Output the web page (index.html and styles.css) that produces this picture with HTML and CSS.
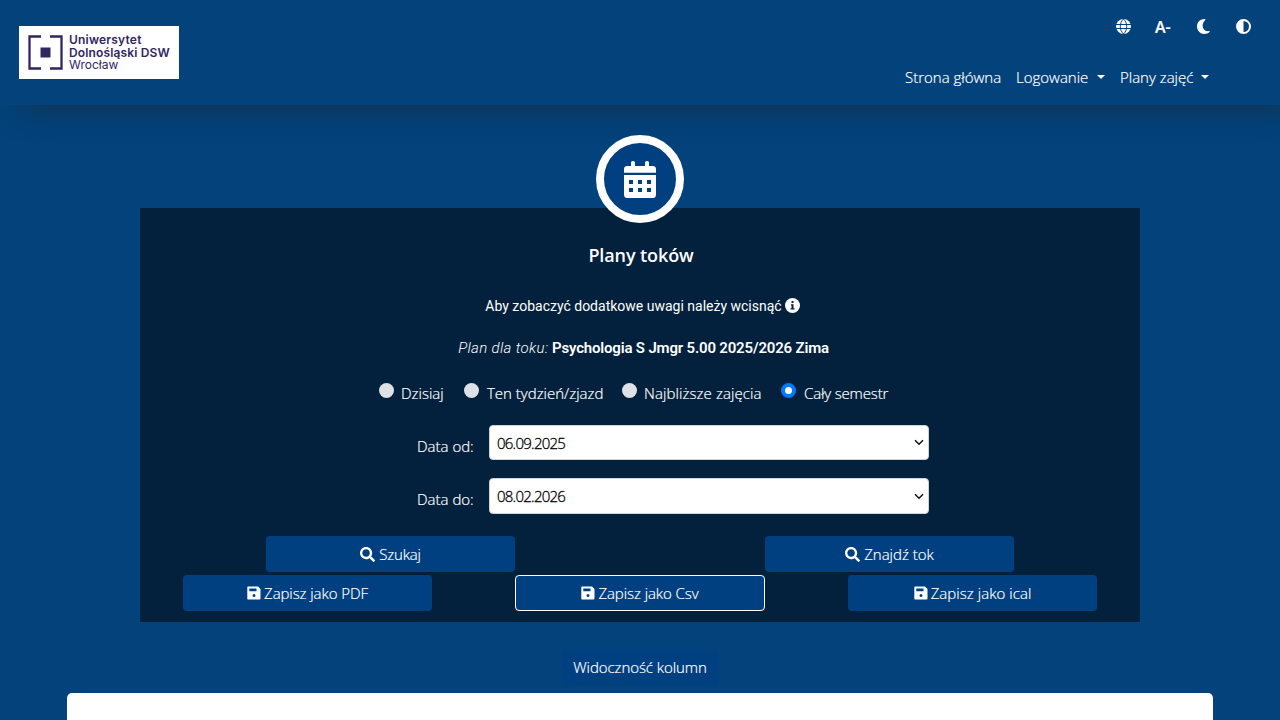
FILE: index.html
```html
<!DOCTYPE html>
<html lang="pl">
<head>
<meta charset="utf-8">
<title>Plany toków</title>
<link rel="stylesheet" href="styles.css">
</head>
<body>
<svg width="0" height="0" class="defs">
  <symbol id="search" viewBox="0 0 512 512"><path d="M505 442.700 405.300 343c-4.500-4.500-10.600-7-17-7H372c27.600-35.300 44-79.700 44-128C416 93.100 322.900 0 208 0S0 93.100 0 208s93.100 208 208 208c48.300 0 92.700-16.400 128-44v16.300c0 6.400 2.500 12.500 7 17l99.700 99.700c9.400 9.400 24.600 9.400 33.900 0l28.300-28.300c9.400-9.400 9.400-24.600.1-34zM208 336c-70.700 0-128-57.200-128-128s57.200-128 128-128 128 57.200 128 128-57.200 128-128 128z"/></symbol>
  <symbol id="save" viewBox="0 0 14 14"><path fill-rule="evenodd" d="M1 .5h10L13.500 3v9.500q0 1-1 1H1q-.7 0-.7-.7V1.200Q.3.500 1 .5zM2.300 2.500v2.800h7.200V2.500zM7 8a1.500 1.500 0 1 0 0 3 1.500 1.500 0 0 0 0-3z"/></symbol>
</svg>
<header class="topbar">
  <div class="logo">
    <svg class="logo-mark" width="35" height="35" viewBox="0 0 35 35"><path d="M13 1.500H1.500v32H13M22 1.500h11.500v32H22" fill="none" stroke="#32265f" stroke-width="2.300"/><path d="M12.500 12.500h10v10h-10z" fill="#32265f"/></svg>
    <div class="logo-text"><b>Uniwersytet</b><b class="second">Dolnośląski DSW</b><span>Wrocław</span></div>
  </div>
  <div class="top-right">
    <div class="tools">
      <svg width="15" height="15" viewBox="0 0 15 15"><circle cx="7.500" cy="7.500" r="7.500" fill="#fff"/><path d="M0 5.500h15M0 9.500h15M7.500 0C3.200 4 3.200 11 7.500 15M7.500 0C11.800 4 11.800 11 7.500 15" fill="none" stroke="#03427a" stroke-width="1"/></svg>
      <b class="font-size">A-</b>
      <svg width="15" height="15" viewBox="0 0 15 15"><path d="M8 .1C4 .2 1 3.500 1 7.500 1 11.700 4.300 15 8.400 15c2.100 0 4-.8 5.300-2.200.3-.4.1-.8-.4-.7C7.500 13.200 4 6.200 9.100 1.200c.7-.7.400-1.200-1.100-1.100z" fill="#fff"/></svg>
      <svg width="15" height="15" viewBox="0 0 15 15"><circle cx="7.500" cy="7.500" r="6.500" fill="none" stroke="#fff" stroke-width="2"/><path d="M7.500 1v13a6.500 6.500 0 0 1 0-13z" fill="#fff"/></svg>
    </div>
    <nav class="menu">
      <a class="m-home">Strona główna</a>
      <a class="m-login"><span>Logowanie</span><i class="caret"></i></a>
      <a class="m-plans"><span>Plany zajęć</span><i class="caret"></i></a>
    </nav>
  </div>
</header>
<main>
  <section class="card">
    <div class="badge"><svg width="32" height="37" viewBox="0 0 32 37"><path fill-rule="evenodd" fill="#fff" d="M0 14h32v19.500q0 3.500-3.500 3.500h-25Q0 37 0 33.500zM5 19v4h4v-4zm9 0v4h4v-4zm9 0v4h4v-4zM5 27v4h4v-4zm9 0v4h4v-4zm9 0v4h4v-4zM0 11.700V8.300Q0 5 3.500 5H7V1.500Q7 0 9 0t2 1.500V5h10V1.500Q21 0 23 0t2 1.500V5h3.500Q32 5 32 8.300v3.400z"/></svg></div>
    <h1>Plany toków</h1>
    <p class="hint"><span>Aby zobaczyć dodatkowe uwagi należy wcisnąć</span><svg width="15" height="15" viewBox="0 0 15 15"><circle cx="7.500" cy="7.500" r="7.500" fill="#fff"/><path d="M6.500 3h2v2h-2zM6 6.200h2.500v4H9.500v1.300h-4v-1.300h1V7.500H6z" fill="#03213d"/></svg></p>
    <p class="plan"><i>Plan dla toku:</i> <b>Psychologia S Jmgr 5.00 2025/2026 Zima</b></p>
    <div class="radios">
      <label class="r1"><i class="dot"></i><span>Dzisiaj</span></label>
      <label class="r2"><i class="dot"></i><span>Ten tydzień/zjazd</span></label>
      <label class="r3"><i class="dot"></i><span>Najbliższe zajęcia</span></label>
      <label class="r4"><i class="dot on"></i><span>Cały semestr</span></label>
    </div>
    <div class="field"><span class="label">Data od:</span><div class="select first"><span>06.09.2025</span><svg width="10" height="7" viewBox="0 0 10 7"><path d="M1 1.200 5 5.200 9 1.200" fill="none" stroke="#111" stroke-width="1.500"/></svg></div></div>
    <div class="field"><span class="label">Data do:</span><div class="select"><span>08.02.2026</span><svg width="10" height="7" viewBox="0 0 10 7"><path d="M1 1.200 5 5.200 9 1.200" fill="none" stroke="#111" stroke-width="1.500"/></svg></div></div>
    <div class="buttons two">
      <a class="btn"><svg class="ico"><use href="#search"/></svg><span class="t-search">Szukaj</span></a>
      <a class="btn"><svg class="ico"><use href="#search"/></svg><span>Znajdź tok</span></a>
    </div>
    <div class="buttons three">
      <a class="btn"><svg class="ico disk"><use href="#save"/></svg><span>Zapisz jako PDF</span></a>
      <a class="btn focus"><svg class="ico disk"><use href="#save"/></svg><span>Zapisz jako Csv</span></a>
      <a class="btn"><svg class="ico disk"><use href="#save"/></svg><span class="t-ical">Zapisz jako ical</span></a>
    </div>
  </section>
  <a class="btn columns"><span>Widoczność kolumn</span></a>
  <section class="table"></section>
</main>
</body>
</html>
```
FILE: styles.css
```css
* { box-sizing: border-box; }
body { margin: 0; height: 720px; overflow: hidden; background: #03427a; color: #fff; font: 300 15px/22px "Open Sans", sans-serif; -webkit-text-stroke: .2px currentColor; }
.defs { display: block; position: absolute; }
a { white-space: nowrap; color: #fff; }
.topbar { height: 105px; background: #03427a; display: flex; justify-content: space-between; padding: 26px 29px 0 19px; box-shadow: 16px 8px 32px -8px rgba(33, 37, 41, .65); }
.logo { width: 160px; height: 53px; background: #fff; display: flex; padding: 9px 0 0 9px; gap: 6px; color: #32265f; -webkit-text-stroke: 0; }
.logo-text { display: flex; flex-direction: column; font: 400 12px/12.500px "Inter", sans-serif; white-space: nowrap; margin-top: -1px; }
.logo-text b { font-weight: 600; letter-spacing: .2px; }
.logo-text b.second { letter-spacing: .15px; }
.top-right { display: flex; flex-direction: column; }
.tools { display: flex; justify-content: flex-end; align-items: center; height: 15px; margin-top: -7px; gap: 25px; }
.font-size { width: 17px; font-weight: 600; font-size: 16px; margin: 0 -1px; }
.menu { display: flex; margin: 32px 42px 0 0; justify-content: flex-end; }
.menu a { display: flex; align-items: center; }
.m-home { width: 111px; }
.m-login { width: 104px; }
.m-plans { width: 89px; }
.m-login span, .m-plans span { width: 81px; }
.caret { flex: none; border: 4px solid transparent; border-top-color: #fff; border-bottom: 0; }
main { display: flex; flex-direction: column; align-items: center; padding-top: 103px; }
.card { width: 1000px; height: 414px; background: #03213d; display: flex; flex-direction: column; align-items: center; }
.badge { flex: none; width: 88px; height: 88px; border: 8px solid #fff; border-radius: 50%; background: #004080; margin-top: -73px; display: flex; align-items: center; justify-content: center; }
h1 { margin: 19px 0 0; padding-left: 2px; font: 600 18px/27px "Open Sans", sans-serif; letter-spacing: -.1px; -webkit-text-stroke: 0; }
p { margin: 0; white-space: nowrap; font-family: Roboto, sans-serif; -webkit-text-stroke: 0; }
.hint { display: flex; align-items: center; gap: 3px; margin-top: 26px; padding-left: 5px; font-weight: 400; font-size: 14px; }
.hint svg { margin-top: -1px; }
.plan { margin-top: 20px; padding-left: 7px; font-weight: 300; }
.plan i { letter-spacing: .35px; }
.plan b { font-weight: 600; letter-spacing: -.18px; }
.radios { width: 522px; display: flex; margin-top: 22px; height: 26px; }
.radios label { display: flex; white-space: nowrap; gap: 7px; line-height: 24px; }
.r1 { width: 85px; }
.r2 { width: 158px; }
.r3 { width: 159px; }
.r3 span { letter-spacing: .1px; }
.r2 span, .r4 span { margin-left: 1px; }
.r4 span { letter-spacing: -.15px; }
.dot { flex: none; width: 15px; height: 15px; border-radius: 50%; background: #dee2e6; margin-top: 2px; }
.dot.on { background: #fff; border: 4.500px solid #007bff; }
.field { display: flex; align-self: stretch; margin: 18px 0 0 277px; gap: 15px; }
.label { width: 57px; line-height: 42px; height: 35px; white-space: nowrap; }
.select { width: 440px; height: 36px; background: #fff; border: 1px solid #ced4da; border-radius: 4px; color: #000; display: flex; align-items: center; justify-content: space-between; padding: 0 4px 0 7px; font-weight: 300; -webkit-text-stroke: .3px #000; }
.select.first { height: 35px; }
.select span { letter-spacing: -.75px; }
.buttons { display: flex; align-self: stretch; height: 36px; flex: none; }
.two { margin-top: 22px; padding: 0 126px; justify-content: space-between; }
.three { margin-top: 3px; padding: 0 43px; justify-content: space-between; letter-spacing: -.07px; }
.btn { width: 249px; height: 36px; background: #004080; border-radius: 4px; display: flex; align-items: center; justify-content: center; gap: 4px; flex: none; }
.three .btn { gap: 3px; }
.t-ical { letter-spacing: .05px; }
.t-search { letter-spacing: -.15px; }
.focus { border: 1px solid #fff; width: 250px; }
.ico { width: 15px; height: 15px; fill: #fff; flex: none; }
.ico.disk { width: 14px; height: 14px; }
.columns { width: 158px; margin-top: 27px; }
.columns span { letter-spacing: -.07px; }
.table { width: 1146px; height: 40px; margin-top: 8px; background: #fff; border-radius: 5px 5px 0 0; }
```
